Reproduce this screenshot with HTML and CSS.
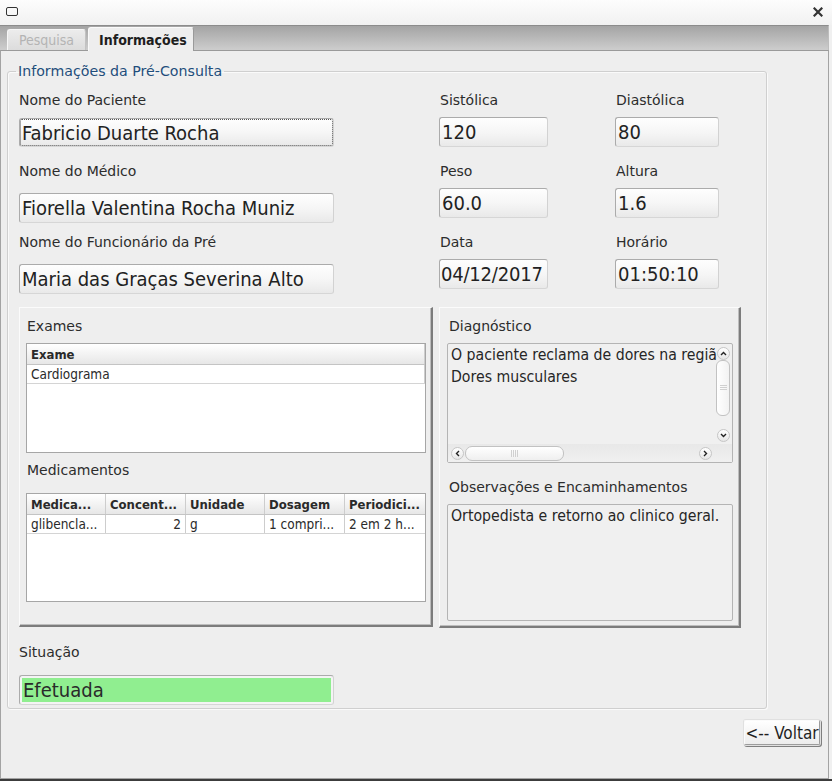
FILE: index.html
```html
<!DOCTYPE html>
<html lang="pt">
<head>
<meta charset="utf-8">
<title>Pré-Consulta</title>
<link rel="stylesheet" href="styles.css">
</head>
<body>
<div class="window">
  <div class="titlebar">
    <span class="win-icon"></span>
    <span class="win-close">
      <svg width="10" height="10" viewBox="0 0 10 10"><path d="M1.5 1.5 L8.5 8.5 M8.5 1.5 L1.5 8.5" stroke="#333" stroke-width="2.2" stroke-linecap="square"/></svg>
    </span>
  </div>
  <div class="tabbar">
    <div class="tab tab-disabled">Pesquisa</div>
    <div class="tab tab-active">Informações</div>
  </div>
  <div class="pane">
    <fieldset class="group">
      <legend class="group-title">Informações da Pré-Consulta</legend>
      <div class="top-form">
        <div class="col-left">
          <div class="lbl l1">Nome do Paciente</div>
          <div class="field big f1 focused">Fabricio Duarte Rocha</div>
          <div class="lbl l2">Nome do Médico</div>
          <div class="field big f2">Fiorella Valentina Rocha Muniz</div>
          <div class="lbl l3">Nome do Funcionário da Pré</div>
          <div class="field big f3">Maria das Graças Severina Alto</div>
        </div>
        <div class="col-right">
          <div class="cell">
            <div class="lbl">Sistólica</div>
            <div class="field small w1">120</div>
          </div>
          <div class="cell">
            <div class="lbl">Diastólica</div>
            <div class="field small w2">80</div>
          </div>
          <div class="cell">
            <div class="lbl">Peso</div>
            <div class="field small w1">60.0</div>
          </div>
          <div class="cell">
            <div class="lbl">Altura</div>
            <div class="field small w2">1.6</div>
          </div>
          <div class="cell">
            <div class="lbl">Data</div>
            <div class="field small w1 tight">04/12/2017</div>
          </div>
          <div class="cell">
            <div class="lbl">Horário</div>
            <div class="field small w2">01:50:10</div>
          </div>
        </div>
      </div>

      <div class="panels">
        <div class="panel panel-left">
          <div class="lbl">Exames</div>
          <div class="table t1">
            <div class="thead">
              <div class="th c-full">Exame</div>
            </div>
            <div class="trow">
              <div class="td c-full">Cardiograma</div>
            </div>
          </div>
          <div class="lbl mt">Medicamentos</div>
          <div class="table t2">
            <div class="thead">
              <div class="th c1">Medica...</div>
              <div class="th c2">Concent...</div>
              <div class="th c3">Unidade</div>
              <div class="th c4">Dosagem</div>
              <div class="th c5">Periodici...</div>
            </div>
            <div class="trow">
              <div class="td c1">glibencla...</div>
              <div class="td c2 num">2</div>
              <div class="td c3">g</div>
              <div class="td c4">1 compri...</div>
              <div class="td c5">2 em 2 h...</div>
            </div>
          </div>
        </div>
        <div class="panel panel-right">
          <div class="lbl">Diagnóstico</div>
          <div class="textarea ta1">
            <div class="ta-body">
              <div class="ta-text">O paciente reclama de dores na regiã<br>Dores musculares</div>
              <div class="vscroll">
                <span class="sb-btn">
                  <svg width="7" height="5" viewBox="0 0 7 5"><path d="M1 4 L3.5 1.5 L6 4" fill="none" stroke="#222" stroke-width="1.4"/></svg>
                </span>
                <span class="sb-thumb-v"><span class="grip-v"></span></span>
                <span class="sb-btn sb-down">
                  <svg width="7" height="5" viewBox="0 0 7 5"><path d="M1 1 L3.5 3.5 L6 1" fill="none" stroke="#222" stroke-width="1.4"/></svg>
                </span>
              </div>
            </div>
            <div class="hscroll">
              <span class="sb-btn">
                <svg width="5" height="7" viewBox="0 0 5 7"><path d="M4 1 L1.5 3.5 L4 6" fill="none" stroke="#222" stroke-width="1.4"/></svg>
              </span>
              <span class="sb-thumb-h"><span class="grip-h"></span></span>
              <span class="sb-btn sb-right">
                <svg width="5" height="7" viewBox="0 0 5 7"><path d="M1 1 L3.5 3.5 L1 6" fill="none" stroke="#222" stroke-width="1.4"/></svg>
              </span>
            </div>
          </div>
          <div class="lbl mt2">Observações e Encaminhamentos</div>
          <div class="textarea ta2">
            <div class="ta-text">Ortopedista e retorno ao clinico geral.</div>
          </div>
        </div>
      </div>

      <div class="lbl sit-lbl">Situação</div>
      <div class="field big status"><span class="status-fill">Efetuada</span></div>
    </fieldset>
    <div class="actions">
      <button class="btn" type="button">&lt;-- Voltar</button>
    </div>
  </div>
</div>
</body>
</html>
```

FILE: styles.css
```css
* { box-sizing: border-box; }

html, body {
  margin: 0;
  padding: 0;
  width: 832px;
  height: 781px;
  overflow: hidden;
  background: #f0f0f0;
  font-family: "DejaVu Sans Condensed", "DejaVu Sans", sans-serif;
  font-stretch: condensed;
  color: #2a2a2a;
}

.window {
  width: 832px;
  height: 781px;
  display: flex;
  flex-direction: column;
  border-bottom: 2px solid #3c3c3c;
}

/* title bar */
.titlebar {
  height: 25px;
  flex: none;
  display: flex;
  align-items: center;
  justify-content: space-between;
  padding: 0 9px 0 6px;
  background: linear-gradient(#fdfdfd, #f1f1f1);
}
.win-icon {
  width: 12px;
  height: 9px;
  border: 1.5px solid #333;
  border-radius: 2px;
  margin-top: -2px;
}
.win-close {
  display: flex;
  margin-top: -1px;
}

/* tab bar */
.tabbar {
  height: 25px;
  flex: none;
  width: 829px;
  display: flex;
  align-items: flex-end;
  padding-left: 7px;
  gap: 2px;
  background: linear-gradient(#a4a4a4, #cdcdcd);
  border-top: 1px solid #8c8c8c;
  border-right: 1px solid #bdbdbd;
}
.tab {
  font-size: 14px;
  line-height: 20px;
  padding: 0 10px;
  border: 1px solid #a8a8a8;
  border-bottom: none;
  border-radius: 3px 3px 0 0;
}
.tab-disabled {
  width: 79px;
  height: 21px;
  text-align: center;
  color: #b4b4b4;
  background: linear-gradient(#ececec, #dcdcdc);
  border-color: #c2c2c2;
  border-top-color: #f6f6f6;
  border-left-color: #f6f6f6;
}
.tab-active {
  width: 106px;
  height: 24px;
  line-height: 24px;
  text-align: center;
  font-weight: bold;
  color: #1e1e1e;
  background: #eeeeee;
  border-color: #fafafa;
  border-right-color: #9a9a9a;
  margin-bottom: -1px;
  position: relative;
  z-index: 1;
}

/* pane */
.pane {
  flex: 1;
  width: 829px;
  background: #eeeeee;
  border: 1px solid #a3a3a3;
  border-top-color: #9a9a9a;
  padding: 0 0 0 6px;
  display: flex;
  flex-direction: column;
}

.group {
  margin: 12px 0 0 0;
  width: 760px;
  height: 646px;
  padding: 0 0 0 11px;
  border: 1px solid #cfcfcf;
  border-radius: 3px;
  box-shadow: inset 1px 1px 0 #fafafa, 1px 1px 0 #fafafa;
  min-width: 0;
}
.group-title {
  font-family: "DejaVu Sans", sans-serif;
  font-stretch: normal;
  font-size: 14.2px;
  line-height: 16px;
  color: #1f4e7c;
  padding: 0 2px;
  margin-left: -3px;
}

.lbl {
  font-family: "DejaVu Sans", sans-serif;
  font-stretch: normal;
  font-size: 14px;
  line-height: 18px;
  height: 18px;
  white-space: nowrap;
  color: #2c2c2c;
}

.top-form {
  display: flex;
  margin-top: 12px;
}
.col-left {
  width: 315px;
  display: flex;
  flex-direction: column;
}
.col-left .l2, .col-left .l3 { margin-top: 15px; }
.col-left .l3 { margin-top: 10px; }
.col-left .f1 { margin-top: 9px; height: 29px; }
.col-left .f2 { margin-top: 13px; }
.col-left .f3 { margin-top: 13px; }

.col-right {
  margin-left: 105px;
  display: grid;
  grid-template-columns: 108px 104px;
  column-gap: 68px;
  row-gap: 15px;
  align-content: start;
}
.cell { display: flex; flex-direction: column; }
.cell .lbl { padding-left: 1px; }
.cell .field { margin-top: 8px; }

.field {
  height: 30px;
  border: 1px solid #ababab;
  border-right-color: #d2d2d2;
  border-bottom-color: #d6d6d6;
  border-radius: 3px;
  background: linear-gradient(#fefefe 0%, #f6f6f6 50%, #e9e9e9 100%);
  font-size: 20px;
  line-height: 28px;
  padding-left: 2px;
  color: #222;
  white-space: nowrap;
  overflow: hidden;
}
.field.big { width: 315px; }
.field.w1 { width: 109px; }
.field.w2 { width: 104px; }
.field.tight { padding-left: 1px; letter-spacing: -0.2px; }
.field.focused {
  outline: 1px dotted #555;
  outline-offset: -2px;
}

/* panels */
.panels {
  display: flex;
  gap: 7px;
  margin-top: 13px;
}
.panel {
  height: 320px;
  background: #eeeeee;
  border-top: 1px solid #fbfbfb;
  border-left: 1px solid #fbfbfb;
  border-right: 2px solid #7c7c7c;
  border-bottom: 2px solid #7c7c7c;
  box-shadow: inset -1px -1px 0 #bdbdbd;
  display: flex;
  flex-direction: column;
}
.panel-left {
  width: 414px;
  padding: 9px 0 0 6px;
}
.panel-left .lbl { padding-left: 1px; }
.panel-right {
  width: 302px;
  height: 321px;
  padding: 9px 0 0 7px;
  margin-left: -1px;
}
.panel-right .lbl { padding-left: 2px; }
.mt { margin-top: 8px; }
.mt2 { margin-top: 15px; }

.table {
  width: 400px;
  background: #ffffff;
  border: 1px solid #a6a6a6;
  font-size: 13.5px;
  margin-top: 8px;
}
.t1 { height: 110px; }
.t2 { height: 109px; margin-top: 14px; }
.thead {
  display: flex;
  height: 21px;
  background: linear-gradient(#ffffff, #e7e7e7);
  border-bottom: 1px solid #c4c4c4;
}
.trow {
  display: flex;
  height: 19px;
  border-bottom: 1px solid #d4d4d4;
}
.th, .td {
  padding: 0 4px;
  white-space: nowrap;
  overflow: hidden;
  border-right: 1px solid #cdcdcd;
}
.th {
  font-weight: bold;
  font-size: 13px;
  line-height: 21px;
  color: #2a2a2a;
}
.td {
  line-height: 18px;
  color: #2a2a2a;
}
.c-full { width: 398px; padding-left: 4px; }
.c1 { width: 79px; }
.c2 { width: 80px; }
.c3 { width: 79px; }
.c4 { width: 80px; }
.c5 { width: 79px; border-right: none; }
.num { text-align: right; }

.textarea {
  width: 286px;
  margin-top: 8px;
  border: 1px solid #b4b4b4;
  border-radius: 2px;
  background: #f0f0f0;
  font-size: 15.7px;
  line-height: 22px;
  color: #262626;
}
.ta-text { padding: 0 0 0 3px; white-space: nowrap; }
.ta1 {
  height: 120px;
  display: flex;
  flex-direction: column;
}
.ta-body {
  flex: 1;
  display: flex;
}
.ta-body .ta-text { flex: 1; min-width: 0; }
.ta2 { height: 117px; margin-top: 8px; }

.vscroll {
  width: 16px;
  flex: none;
  display: flex;
  flex-direction: column;
  align-items: center;
  padding: 3px 0 2px 0;
  margin-right: 1px;
}
.sb-btn {
  width: 13px;
  height: 13px;
  border-radius: 50%;
  border: 1px solid #c6c6c6;
  background: linear-gradient(#ffffff, #e6e6e6);
  display: flex;
  align-items: center;
  justify-content: center;
  flex: none;
}
.sb-thumb-v {
  width: 14px;
  height: 56px;
  margin-top: 0;
  border: 1px solid #c2c2c2;
  border-radius: 6px;
  background: linear-gradient(90deg, #ffffff, #f2f2f2);
  display: flex;
  align-items: center;
  justify-content: center;
  flex: none;
}
.grip-v {
  width: 7px;
  height: 6px;
  background: repeating-linear-gradient(#d0d0d0 0 1px, transparent 1px 2px);
}
.sb-down { margin-top: auto; }
.hscroll {
  height: 18px;
  flex: none;
  display: flex;
  align-items: center;
  padding: 0 20px 0 3px;
  background: linear-gradient(#e8e8e8, #f0f0f0);
}
.sb-thumb-h {
  width: 99px;
  height: 15px;
  margin-left: 1px;
  border: 1px solid #c2c2c2;
  border-radius: 7px;
  background: linear-gradient(#ffffff, #efefef);
  display: flex;
  align-items: center;
  justify-content: center;
}
.grip-h {
  width: 7px;
  height: 7px;
  background: repeating-linear-gradient(90deg, #d0d0d0 0 1px, transparent 1px 2px);
}
.sb-right { margin-left: auto; }

.sit-lbl { margin-top: 15px; }
.status {
  margin-top: 14px;
  padding: 2px;
  background: #f4f4f4;
}
.status-fill {
  display: block;
  height: 24px;
  background: #90ee90;
  line-height: 24px;
  padding-left: 1px;
  color: #2a2a2a;
}

.actions {
  display: flex;
  justify-content: flex-end;
  padding: 11px 8px 0 0;
}
.btn {
  width: 76px;
  height: 25px;
  font-family: inherit;
  font-stretch: condensed;
  font-size: 17px;
  line-height: 22px;
  color: #1f1f1f;
  padding: 0;
  border: 1px solid #9c9c9c;
  border-top-color: #fbfbfb;
  border-left-color: #fbfbfb;
  border-radius: 2px;
  background: linear-gradient(#ffffff, #ececec);
  box-shadow: 0 0 0 1px #e0e0e0, 1px 1px 0 1px #7f7f7f;
  white-space: nowrap;
}
```
